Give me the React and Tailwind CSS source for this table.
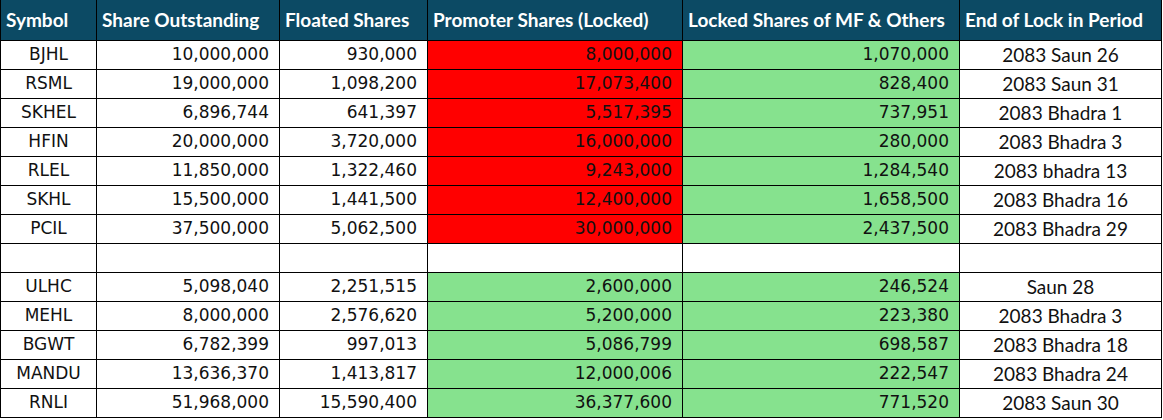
import React from "react";

const ROWS = [
  ["BJHL", "10,000,000", "930,000", "8,000,000", "1,070,000", "2083 Saun 26", "red"],
  ["RSML", "19,000,000", "1,098,200", "17,073,400", "828,400", "2083 Saun 31", "red"],
  ["SKHEL", "6,896,744", "641,397", "5,517,395", "737,951", "2083 Bhadra 1", "red"],
  ["HFIN", "20,000,000", "3,720,000", "16,000,000", "280,000", "2083 Bhadra 3", "red"],
  ["RLEL", "11,850,000", "1,322,460", "9,243,000", "1,284,540", "2083 bhadra 13", "red"],
  ["SKHL", "15,500,000", "1,441,500", "12,400,000", "1,658,500", "2083 Bhadra 16", "red"],
  ["PCIL", "37,500,000", "5,062,500", "30,000,000", "2,437,500", "2083 Bhadra 29", "red"],
  null,
  ["ULHC", "5,098,040", "2,251,515", "2,600,000", "246,524", "Saun 28", "green"],
  ["MEHL", "8,000,000", "2,576,620", "5,200,000", "223,380", "2083 Bhadra 3", "green"],
  ["BGWT", "6,782,399", "997,013", "5,086,799", "698,587", "2083 Bhadra 18", "green"],
  ["MANDU", "13,636,370", "1,413,817", "12,000,006", "222,547", "2083 Bhadra 24", "green"],
  ["RNLI", "51,968,000", "15,590,400", "36,377,600", "771,520", "2083 Saun 30", "green"],
];

const HEAD = [
  "Symbol",
  "Share Outstanding",
  "Floated Shares",
  "Promoter Shares (Locked)",
  "Locked Shares of MF & Others",
  "End of Lock in Period",
];

const num = "border border-black px-[10px] p-0 text-right font-['DejaVu_Sans',sans-serif] text-[17px] leading-none text-[#111]";

export default function App() {
  return (
    <div className="w-[1163px] h-[420px] bg-white overflow-hidden">
      <table className="table-fixed border-collapse w-[1161px]">
        <colgroup>
          <col className="w-[96px]" />
          <col className="w-[183px]" />
          <col className="w-[148px]" />
          <col className="w-[255px]" />
          <col className="w-[277px]" />
          <col className="w-[202px]" />
        </colgroup>
        <thead>
          <tr className="bg-[#0c4a64]">
            {HEAD.map((h) => (
              <th
                key={h}
                className="h-[40px] border-x border-b border-black px-[5px] text-left font-['Lato',sans-serif] font-bold text-[19px] leading-none text-white whitespace-nowrap"
              >
                {h}
              </th>
            ))}
          </tr>
        </thead>
        <tbody>
          {ROWS.map((r, i) =>
            r ? (
              <tr key={i}>
                <td className="h-[29px] border border-black text-center font-['DejaVu_Sans',sans-serif] text-[17px] leading-none text-[#111]">{r[0]}</td>
                <td className={num}>{r[1]}</td>
                <td className={num}>{r[2]}</td>
                <td className={num + (r[6] === "red" ? " bg-[#ff0000] text-[#2a0000]" : " bg-[#86e28e]")}>{r[3]}</td>
                <td className={num + " bg-[#86e28e]"}>{r[4]}</td>
                <td className="border border-black text-center font-['Lato',sans-serif] text-[19px] leading-none text-[#111]">{r[5]}</td>
              </tr>
            ) : (
              <tr key={i}>
                {HEAD.map((h, j) => (
                  <td key={h} className={j === 0 ? "h-[29px] border border-black" : "border border-black"} />
                ))}
              </tr>
            )
          )}
        </tbody>
      </table>
    </div>
  );
}
